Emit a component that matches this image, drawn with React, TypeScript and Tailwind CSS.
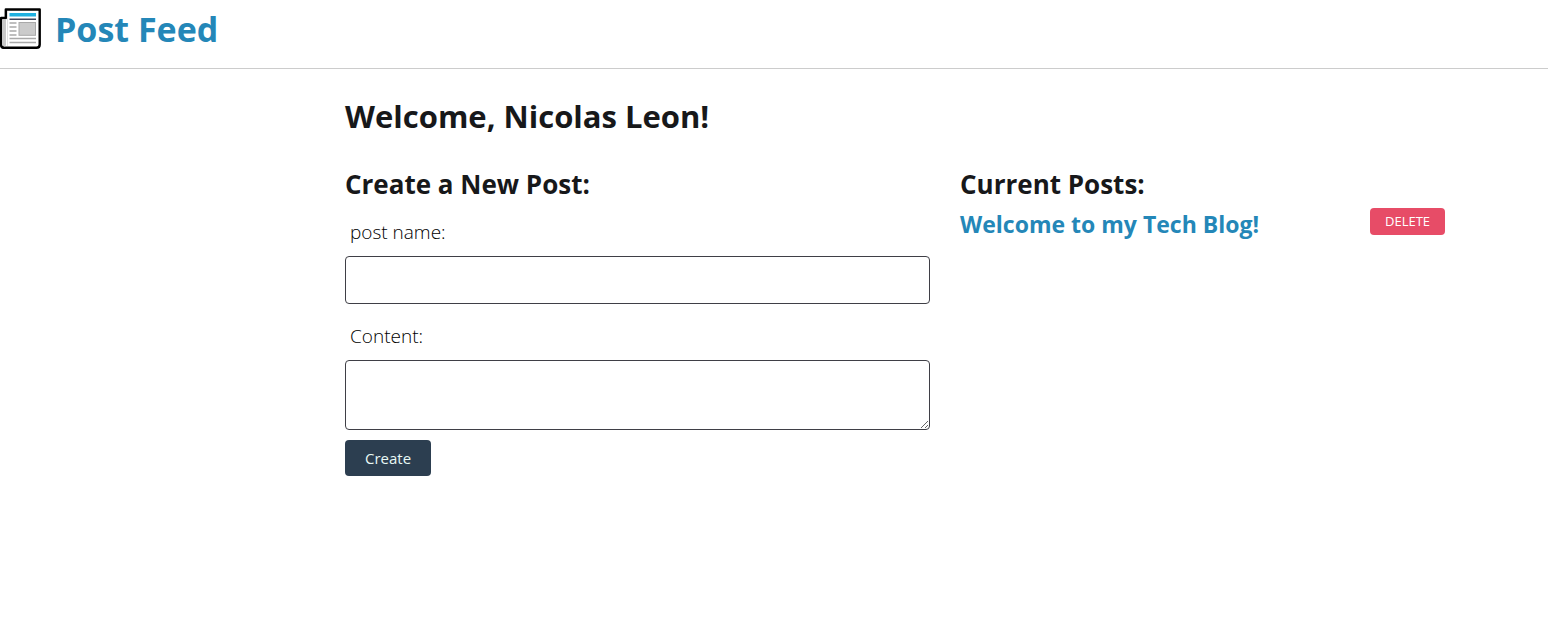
import { useState } from "react";

function NewspaperIcon() {
  return (
    <svg viewBox="0 0 42 42" className="size-[42px] shrink-0" aria-hidden="true">
      <path d="M1 10H5.8V1.5H39.7V36.5Q39.7 39.8 36.5 39.8H4.5Q1 39.8 1 36.5Z" fill="#fff" stroke="#000" strokeWidth="2.4" strokeLinejoin="round" />
      <path d="M2.2 11.5H6V36.5Q6 38.4 4.5 38.4Q2.2 38.4 2.2 36Z" fill="#c9c9c9" />
      <path d="M7 3H8V38H7Z" fill="#e2e2e2" />
      <path d="M9.5 5H36V8.5H9.5Z" fill="#1fb0e0" />
      <path d="M9.5 10.5H36V12H9.5Z" fill="#3c435a" />
      <path d="M9.5 15H16.5M9.5 19H16.5M9.5 23H16.5M9.5 27H16.5M9.5 30.5H36M9.5 34.5H36" stroke="#a9a9a9" strokeWidth="1.5" />
      <rect x="19" y="14.5" width="16.5" height="12.8" fill="#cbcbcb" stroke="#a9a9a9" strokeWidth="1" />
    </svg>
  );
}

const field = "block w-full rounded-[4px] border border-[#3f3f46] bg-white px-3 text-lg outline-none";
const label = "block px-[5px] text-[19px] font-light leading-8 text-black";

export default function App() {
  const [name, setName] = useState("");
  const [content, setContent] = useState("");

  return (
    <div className="min-h-screen bg-white font-['Open_Sans','Noto_Sans',sans-serif] text-[#17181a]">
      <header className="flex h-[69px] items-start gap-[13px] border-b border-[#cccccc] pt-2">
        <NewspaperIcon />
        <h1 className="text-[34px] font-bold leading-[42px]">
          <a href="#feed" className="text-[#2487b8]">Post Feed</a>
        </h1>
      </header>
      <main className="pl-[345px] pr-[3px] pt-[23px]">
        <h2 className="text-[31px] font-bold leading-12">Welcome, Nicolas Leon!</h2>
        <div className="mt-6 grid grid-cols-2 gap-[30px]">
          <section>
            <h3 className="text-[26px] font-bold leading-10">Create a New Post:</h3>
            <form onSubmit={(e) => e.preventDefault()}>
              <label htmlFor="post-name" className={`${label} mt-3`}>post name:</label>
              <input id="post-name" type="text" value={name} onChange={(e) => setName(e.target.value)} className={`${field} mt-2 h-12`} />
              <label htmlFor="post-content" className={`${label} mt-4`}>Content:</label>
              <textarea id="post-content" value={content} onChange={(e) => setContent(e.target.value)} className={`${field} mt-2 h-[70px] resize`} />
              <button type="submit" className="mt-[10px] h-9 rounded-[4px] bg-[#2c3e50] px-5 text-[15px] text-[#e8f8f5]">Create</button>
            </form>
          </section>
          <section>
            <h3 className="text-[26px] font-bold leading-10">Current Posts:</h3>
            <div className="flex items-start">
              <h4 className="w-[410px] text-[23px] font-bold leading-10">
                <a href="#post" className="text-[#2487b8]">Welcome to my Tech Blog!</a>
              </h4>
              <button type="button" className="mt-1 h-[27px] rounded-[4px] bg-[#e74c67] px-[15px] text-[13px] text-white">DELETE</button>
            </div>
          </section>
        </div>
      </main>
    </div>
  );
}
